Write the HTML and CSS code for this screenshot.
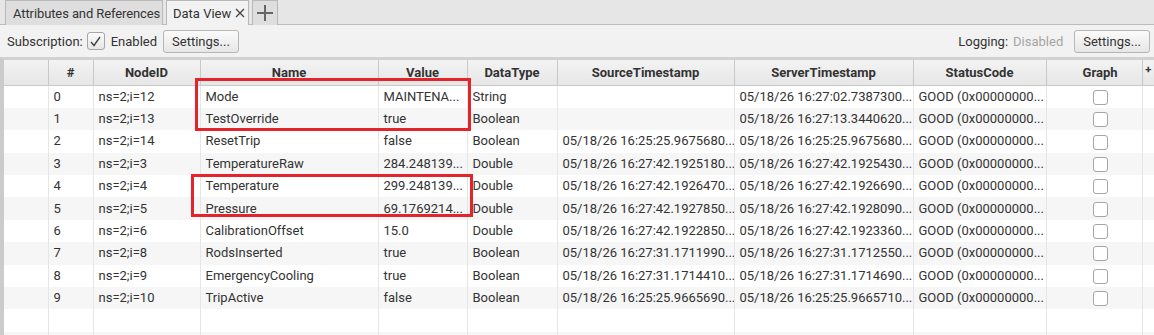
FILE: index.html
```html
<!DOCTYPE html>
<html lang="en">
<head>
    <meta charset="UTF-8">
    <title>Data View</title>
    <link rel="stylesheet" href="styles.css">
</head>
<body>
    <div class="tabbar">
        <div class="tab first">Attributes and References</div>
        <div class="tab active">Data View
            <svg class="close" width="10" height="10" viewBox="0 0 10 10"><path d="M1 1L9 9M9 1L1 9" stroke="#444" stroke-width="1.3"/></svg>
        </div>
        <div class="tab add">
            <svg width="18" height="18" viewBox="0 0 18 18"><path d="M9 1V17M1 9H17" stroke="#666" stroke-width="2"/></svg>
        </div>
    </div>

    <div class="toolbar">
        <span>Subscription:</span>
        <span class="check checked">
            <svg width="13" height="13" viewBox="0 0 13 13"><path d="M2 7L5 10.5L11 2" fill="none" stroke="#444" stroke-width="1.4"/></svg>
        </span>
        <span>Enabled</span>
        <button class="btn">Settings...</button>
        <span class="spacer"></span>
        <span>Logging:</span>
        <span class="muted">Disabled</span>
        <button class="btn">Settings...</button>
    </div>

    <div class="grid-wrap">
        <table class="grid">
            <colgroup>
                <col style="width:44px"><col style="width:45px"><col style="width:107px"><col style="width:178px">
                <col style="width:89px"><col style="width:90px"><col style="width:177px"><col style="width:179px">
                <col style="width:133px"><col style="width:96px"><col style="width:12px">
            </colgroup>
            <thead>
                <tr>
                    <th></th><th>#</th><th>NodeID</th><th>Name</th><th>Value</th><th>DataType</th>
                    <th>SourceTimestamp</th><th>ServerTimestamp</th><th>StatusCode</th><th class="g">Graph</th><th class="corner">+</th>
                </tr>
            </thead>
            <tbody>
                <tr><td></td><td>0</td><td>ns=2;i=12</td><td>Mode</td><td>MAINTENA...</td><td>String</td><td></td><td>05/18/26 16:27:02.7387300...</td><td>GOOD (0x00000000...</td><td class="g"><span class="check"></span></td><td></td></tr>
                <tr><td></td><td>1</td><td>ns=2;i=13</td><td>TestOverride</td><td>true</td><td>Boolean</td><td></td><td>05/18/26 16:27:13.3440620...</td><td>GOOD (0x00000000...</td><td class="g"><span class="check"></span></td><td></td></tr>
                <tr><td></td><td>2</td><td>ns=2;i=14</td><td>ResetTrip</td><td>false</td><td>Boolean</td><td>05/18/26 16:25:25.9675680...</td><td>05/18/26 16:25:25.9675680...</td><td>GOOD (0x00000000...</td><td class="g"><span class="check"></span></td><td></td></tr>
                <tr><td></td><td>3</td><td>ns=2;i=3</td><td>TemperatureRaw</td><td>284.248139...</td><td>Double</td><td>05/18/26 16:27:42.1925180...</td><td>05/18/26 16:27:42.1925430...</td><td>GOOD (0x00000000...</td><td class="g"><span class="check"></span></td><td></td></tr>
                <tr><td></td><td>4</td><td>ns=2;i=4</td><td>Temperature</td><td>299.248139...</td><td>Double</td><td>05/18/26 16:27:42.1926470...</td><td>05/18/26 16:27:42.1926690...</td><td>GOOD (0x00000000...</td><td class="g"><span class="check"></span></td><td></td></tr>
                <tr><td></td><td>5</td><td>ns=2;i=5</td><td>Pressure</td><td>69.1769214...</td><td>Double</td><td>05/18/26 16:27:42.1927850...</td><td>05/18/26 16:27:42.1928090...</td><td>GOOD (0x00000000...</td><td class="g"><span class="check"></span></td><td></td></tr>
                <tr><td></td><td>6</td><td>ns=2;i=6</td><td>CalibrationOffset</td><td>15.0</td><td>Double</td><td>05/18/26 16:27:42.1922850...</td><td>05/18/26 16:27:42.1923360...</td><td>GOOD (0x00000000...</td><td class="g"><span class="check"></span></td><td></td></tr>
                <tr><td></td><td>7</td><td>ns=2;i=8</td><td>RodsInserted</td><td>true</td><td>Boolean</td><td>05/18/26 16:27:31.1711990...</td><td>05/18/26 16:27:31.1712550...</td><td>GOOD (0x00000000...</td><td class="g"><span class="check"></span></td><td></td></tr>
                <tr><td></td><td>8</td><td>ns=2;i=9</td><td>EmergencyCooling</td><td>true</td><td>Boolean</td><td>05/18/26 16:27:31.1714410...</td><td>05/18/26 16:27:31.1714690...</td><td>GOOD (0x00000000...</td><td class="g"><span class="check"></span></td><td></td></tr>
                <tr><td></td><td>9</td><td>ns=2;i=10</td><td>TripActive</td><td>false</td><td>Boolean</td><td>05/18/26 16:25:25.9665690...</td><td>05/18/26 16:25:25.9665710...</td><td>GOOD (0x00000000...</td><td class="g"><span class="check"></span></td><td></td></tr>
                <tr><td></td><td></td><td></td><td></td><td></td><td></td><td></td><td></td><td></td><td></td><td></td></tr>
                <tr><td></td><td></td><td></td><td></td><td></td><td></td><td></td><td></td><td></td><td></td><td></td></tr>
            </tbody>
        </table>
    </div>

    <!-- highlight boxes drawn over the grid -->
    <div class="mark mark-a"></div>
    <div class="mark mark-b"></div>
</body>
</html>
```

FILE: styles.css
```css
body {
    margin: 0;
    width: 1154px;
    height: 335px;
    overflow: hidden;
    position: relative;
    font-family: Roboto, "Noto Sans", sans-serif;
    font-size: 13px;
    color: #333;
    background: #f2f2f2;
}
.tabbar {
    height: 25px;
    box-sizing: border-box;
    display: flex;
    align-items: flex-end;
    gap: 3px;
    padding-left: 5px;
    background: #e6e6e6;
    border-bottom: 1px solid #bcbcbc;
}
.tab {
    height: 25px;
    box-sizing: border-box;
    display: flex;
    align-items: center;
    padding: 0 4px 0 7px;
    background: #dedede;
    border: 1px solid #b8b8b8;
    border-bottom: none;
    margin-bottom: -1px;
}
.tab.first {
    width: 158px;
    padding: 0 0 0 7px;
    letter-spacing: -0.1px;
}
.tab.active {
    background: #f2f2f2;
    padding: 0 3px 0 6px;
}
.close {
    margin-left: 4px;
}
.tab.add {
    padding: 0 3px;
}
.toolbar {
    height: 32px;
    display: flex;
    align-items: center;
    padding: 0 4px 0 7px;
}
.spacer {
    flex: 1;
}
.muted {
    color: #a5a5a5;
    margin-left: 5px;
    margin-right: 5px;
}
.check {
    display: inline-block;
    box-sizing: border-box;
    width: 15px;
    height: 15px;
    border: 1px solid #a6a6a6;
    border-radius: 3px;
    background: #fff;
    vertical-align: middle;
}
.check.checked {
    display: inline-flex;
    align-items: center;
    justify-content: center;
    width: 18px;
    height: 18px;
    margin: 0 6px 0 4px;
    background: linear-gradient(#fafafa, #e6e6e6);
}
.btn {
    height: 23px;
    padding: 0 8px;
    margin-left: 6px;
    font-family: inherit;
    font-size: 13px;
    color: #333;
    background: linear-gradient(#fbfbfb, #e6e6e6);
    border: 1px solid #b6b6b6;
    border-radius: 3px;
}
.grid-wrap {
    border-top: 3px solid #d2d2d2;
    border-left: 4px solid #cbcbcb;
    background: #fff;
    height: 280px;
    overflow: hidden;
}
.grid {
    table-layout: fixed;
    border-collapse: collapse;
    width: 1150px;
}
.grid th {
    height: 23px;
    padding: 0;
    font-weight: bold;
    text-align: center;
    line-height: 16px;
    background: linear-gradient(#f3f3f3, #e6e6e6);
    border-right: 1px solid #c9c9c9;
    border-bottom: 1px solid #c9c9c9;
}
.grid th.corner {
    border-right: none;
    font-size: 11px;
    vertical-align: top;
    padding-top: 2px;
}
.grid tbody tr {
    height: 22.4px;
}
.grid td {
    padding: 0 0 0 5px;
    line-height: 16px;
    white-space: nowrap;
    overflow: hidden;
    border-right: 1px solid #e6e6e6;
}
.grid td:last-child {
    border-right: none;
}
.grid .g {
    text-align: center;
    padding: 0 0 0 12px;
}
.grid tbody tr:nth-child(even) {
    background: #f6f6f6;
}
.mark {
    position: absolute;
    border: 3px solid #e3242b;
}
.mark-a {
    left: 195px;
    top: 78px;
    width: 270px;
    height: 47px;
}
.mark-b {
    left: 191px;
    top: 174px;
    width: 276px;
    height: 37px;
}
```
